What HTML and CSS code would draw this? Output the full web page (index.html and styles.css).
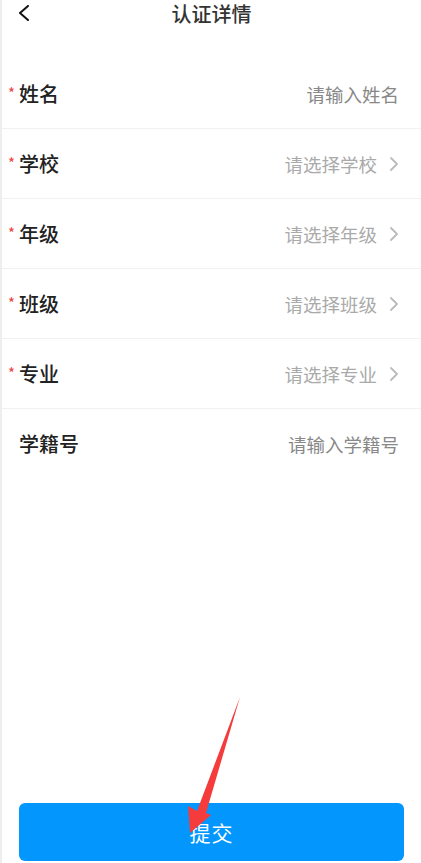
FILE: index.html
```html
<!DOCTYPE html>
<html lang="zh-CN">
<head>
    <meta charset="UTF-8">
    <meta name="viewport" content="width=device-width, initial-scale=1.0">
    <title>认证详情</title>
    <link rel="stylesheet" href="styles.css">
</head>
<body>

<div class="page">
    <!-- top bar -->
    <div class="nav">
        <span class="back">
            <svg width="14" height="16" viewBox="0 0 14 16"><path d="M11 1 L3 8 L11 15" fill="none" stroke="#111" stroke-width="2" stroke-linecap="round" stroke-linejoin="round"/></svg>
        </span>
        <h1 class="title">认证详情</h1>
    </div>

    <!-- form rows -->
    <div class="form">
        <div class="row">
            <span class="req">*</span>
            <span class="label">姓名</span>
            <span class="value input">请输入姓名</span>
        </div>
        <div class="row">
            <span class="req">*</span>
            <span class="label">学校</span>
            <span class="value select">请选择学校</span>
            <span class="arrow"><svg width="10" height="16" viewBox="0 0 10 16"><path d="M2 2 L8 8 L2 14" fill="none" stroke="#bbb" stroke-width="1.8" stroke-linecap="round" stroke-linejoin="round"/></svg></span>
        </div>
        <div class="row">
            <span class="req">*</span>
            <span class="label">年级</span>
            <span class="value select">请选择年级</span>
            <span class="arrow"><svg width="10" height="16" viewBox="0 0 10 16"><path d="M2 2 L8 8 L2 14" fill="none" stroke="#bbb" stroke-width="1.8" stroke-linecap="round" stroke-linejoin="round"/></svg></span>
        </div>
        <div class="row">
            <span class="req">*</span>
            <span class="label">班级</span>
            <span class="value select">请选择班级</span>
            <span class="arrow"><svg width="10" height="16" viewBox="0 0 10 16"><path d="M2 2 L8 8 L2 14" fill="none" stroke="#bbb" stroke-width="1.8" stroke-linecap="round" stroke-linejoin="round"/></svg></span>
        </div>
        <div class="row">
            <span class="req">*</span>
            <span class="label">专业</span>
            <span class="value select">请选择专业</span>
            <span class="arrow"><svg width="10" height="16" viewBox="0 0 10 16"><path d="M2 2 L8 8 L2 14" fill="none" stroke="#bbb" stroke-width="1.8" stroke-linecap="round" stroke-linejoin="round"/></svg></span>
        </div>
        <div class="row last">
            <span class="req"></span>
            <span class="label">学籍号</span>
            <span class="value input">请输入学籍号</span>
        </div>
    </div>

    <div class="spacer"></div>

    <button class="submit">提交</button>

    <!-- annotation arrow -->
    <svg class="pointer" width="421" height="863" viewBox="0 0 421 863">
        <polygon points="240,697 206,813 211,815 190,833 188,806 197,811" fill="#f53b3b"/>
    </svg>
</div>

</body>
</html>
```

FILE: styles.css
```css
body {
    margin: 0;
    background-color: #fff;
    font-family: "Noto Sans CJK SC", "Noto Sans", sans-serif;
}
.page {
    position: relative;
    width: 421px;
    min-height: 863px;
    display: flex;
    flex-direction: column;
    box-sizing: border-box;
    border-left: 2px solid #eeeeee;
    overflow: hidden;
}
.nav {
    height: 59px;
    display: flex;
    justify-content: center;
    position: relative;
}
.back {
    position: absolute;
    left: 15px;
    top: 2px;
}
.title {
    margin: 0;
    font-size: 20px;
    font-weight: 500;
    line-height: 28px;
    color: #333;
}
.row {
    height: 69px;
    display: flex;
    align-items: center;
    padding: 0 22px 0 6px;
    border-bottom: 1px solid #f1f1f1;
}
.row.last {
    border-bottom: none;
}
.req {
    width: 11px;
    margin-top: -3px;
    font-size: 15px;
    color: #f04040;
}
.label {
    flex: 1;
    font-size: 20px;
    font-weight: 500;
    color: #222;
}
.value {
    font-size: 18.5px;
}
.input {
    color: #888;
}
.select {
    color: #aaa;
}
.arrow {
    display: flex;
    margin-left: 12px;
}
.spacer {
    flex: 1;
}
.submit {
    margin: 0 17px 2px 17px;
    height: 58px;
    border: none;
    border-radius: 6px;
    background-color: #0397fe;
    color: #fff;
    font-family: inherit;
    font-size: 21px;
    letter-spacing: 1px;
}
.pointer {
    position: absolute;
    left: -2px;
    top: 0;
    pointer-events: none;
}
```
